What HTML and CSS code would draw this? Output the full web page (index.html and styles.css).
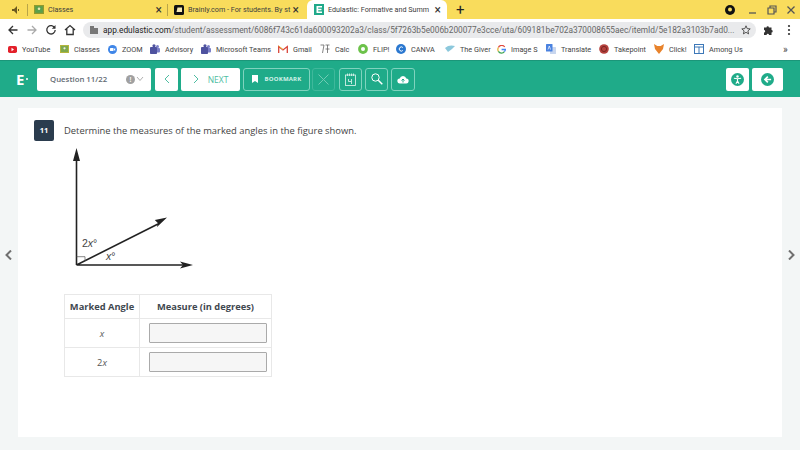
FILE: index.html
```html
<!DOCTYPE html>
<html>
<head>
<meta charset="utf-8">
<title>Edulastic</title>
<link rel="stylesheet" href="styles.css">
</head>
<body>

<!-- Browser tabs -->
<div class="tabstrip">
  <svg class="tab-audio" width="10" height="10" viewBox="0 0 10 10"><path d="M1 4h2l3-3v8L3 6H1z" fill="#6b5a20"/><path d="M7.500 4v2" stroke="#6b5a20"/></svg>
  <div class="tab-sep"></div>
  <div class="tab tab-classes">
    <svg class="favicon" width="10" height="9" viewBox="0 0 10 9"><rect width="10" height="9" fill="#8f9a2e"/><rect x="1.200" y="1.200" width="7.600" height="6.600" fill="#5aa04c"/><circle cx="5" cy="3.800" r="1.300" fill="#e8e6b0"/></svg>
    <span class="tab-title">Classes</span>
    <span class="tab-close">&times;</span>
  </div>
  <div class="tab-sep"></div>
  <div class="tab tab-brainly">
    <svg class="favicon" width="10" height="10" viewBox="0 0 10 10"><rect width="10" height="10" rx="1.500" fill="#111"/><path d="M3.500 2.500H8V7H2.500z" fill="#f7e9b0"/></svg>
    <span class="tab-title">Brainly.com - For students. By st</span>
    <span class="tab-close">&times;</span>
  </div>
  <div class="tab tab-active">
    <svg class="favicon" width="10" height="11" viewBox="0 0 10 11"><rect width="10" height="11" fill="#1fa98a"/><path d="M2.500 2h5.500v1.500H4.200v1.200H7.500v1.500H4.200v1.300H8V9H2.500z" fill="#fff"/></svg>
    <span class="tab-title">Edulastic: Formative and Summ</span>
    <span class="tab-close">&times;</span>
  </div>
  <span class="tab-new">+</span>
  <div class="tabstrip-right">
    <svg width="12" height="12" viewBox="0 0 12 12"><circle cx="6" cy="6" r="5" fill="#111"/><circle cx="6" cy="5.500" r="2" fill="#f7dc5f"/></svg>
    <svg class="win-min" width="10" height="10" viewBox="0 0 10 10"><path d="M1 8h7" stroke="#555" stroke-width="1.300"/></svg>
    <svg class="win-max" width="10" height="10" viewBox="0 0 10 10"><path d="M1 3h6v6H1zM3 3V1h6v6H7" fill="none" stroke="#555" stroke-width="1.200"/></svg>
    <svg class="win-close" width="10" height="10" viewBox="0 0 10 10"><path d="M1.500 1.500l7 7M8.500 1.500l-7 7" stroke="#555" stroke-width="1.300"/></svg>
  </div>
</div>

<!-- Address bar -->
<div class="toolbar">
  <svg width="12" height="12" viewBox="0 0 12 12"><path d="M10.500 6H2M6 2L2 6l4 4" fill="none" stroke="#333" stroke-width="1.300"/></svg>
  <svg width="12" height="12" viewBox="0 0 12 12"><path d="M1.500 6H10M6 2l4 4-4 4" fill="none" stroke="#aaa" stroke-width="1.300"/></svg>
  <svg width="12" height="12" viewBox="0 0 12 12"><path d="M9.800 4A4.200 4.200 0 1 0 10.200 6" fill="none" stroke="#333" stroke-width="1.300"/><path d="M10.500 1v3.800H6.800z" fill="#333"/></svg>
  <svg width="12" height="12" viewBox="0 0 12 12"><path d="M1 6l5-4.500L11 6M2.800 5v5.500h6.400V5" fill="none" stroke="#333" stroke-width="1.300"/></svg>
  <div class="omnibox">
    <svg width="8" height="8" viewBox="0 0 8 8"><path d="M0 0h4v2h4v6H0z" fill="#777"/></svg>
    <span class="url"><b>app.edulastic.com</b>/student/assessment/6086f743c61da600093202a3/class/5f7263b5e006b200077e3cce/uta/609181be702a370008655aec/itemId/5e182a3103b7ad0...</span>
    <svg width="10" height="10" viewBox="0 0 10 10"><path d="M5 .8l1.200 2.800 3 .3-2.300 2 .7 3L5 7.300 2.400 8.900l.7-3-2.300-2 3-.3z" fill="none" stroke="#444" stroke-width=".9"/></svg>
  </div>
  <svg class="puzzle" width="10" height="10" viewBox="0 0 10 10"><path d="M0 2.500h2.500a1.200 1.200 0 0 1 2.400 0h2.600V5a1.200 1.200 0 0 1 0 2.400V10H5a1.200 1.200 0 0 0-2.400 0H0V7.500a1.200 1.200 0 0 0 0-2.400z" fill="#333"/></svg>
  <svg class="kebab" width="4" height="12" viewBox="0 0 4 12"><circle cx="2" cy="2" r="1.100" fill="#333"/><circle cx="2" cy="6" r="1.100" fill="#333"/><circle cx="2" cy="10" r="1.100" fill="#333"/></svg>
</div>

<!-- Bookmarks -->
<div class="bookmarks">
  <div class="bm bm-yt"><svg width="9" height="7" viewBox="0 0 9 7"><rect width="9" height="7" rx="1.800" fill="#e3202a"/><path d="M3.500 1.800L6 3.500 3.500 5.200z" fill="#fff"/></svg>YouTube</div>
  <div class="bm bm-classes"><svg width="9" height="8" viewBox="0 0 9 8"><rect width="9" height="8" fill="#b3b63c"/><rect x="1" y="1" width="7" height="6" fill="#7fa84c"/><circle cx="4.500" cy="3.300" r="1.100" fill="#eee"/></svg>Classes</div>
  <div class="bm bm-zoom"><svg width="9" height="9" viewBox="0 0 9 9"><circle cx="4.500" cy="4.500" r="4.500" fill="#3f86e8"/><rect x="2" y="3" width="3.500" height="3" rx=".6" fill="#fff"/><path d="M6 4l1.200-.9v2.800L6 5z" fill="#fff"/></svg>ZOOM</div>
  <div class="bm bm-advisory"><svg width="10" height="10" viewBox="0 0 10 10"><circle cx="7.500" cy="2.500" r="1.500" fill="#7b80c8"/><rect x="5" y="4" width="5" height="4.500" rx="1" fill="#7b80c8"/><circle cx="4" cy="1.800" r="1.600" fill="#4e529f"/><rect y="3" width="7" height="7" rx=".8" fill="#4e529f"/></svg>Advisory</div>
  <div class="bm bm-teams"><svg width="10" height="10" viewBox="0 0 10 10"><circle cx="7.500" cy="2.500" r="1.500" fill="#7b80c8"/><rect x="5" y="4" width="5" height="4.500" rx="1" fill="#7b80c8"/><circle cx="4" cy="1.800" r="1.600" fill="#4e529f"/><rect y="3" width="7" height="7" rx=".8" fill="#4e529f"/></svg>Microsoft Teams</div>
  <div class="bm bm-gmail"><svg width="10" height="8" viewBox="0 0 10 8"><path d="M.7 8V1.500L5 5l4.300-3.500V8" fill="none" stroke="#d9453a" stroke-width="1.300"/><path d="M.7 1L5 4.500" stroke="#e8b73c"/></svg>Gmail</div>
  <div class="bm bm-calc"><svg width="10" height="10" viewBox="0 0 10 10"><path d="M.5 1h3.500L2.500 9M5.500 1h4M7.500 1v8M5.500 5h4" fill="none" stroke="#666" stroke-width=".8"/></svg>Calc</div>
  <div class="bm bm-flip"><svg width="10" height="10" viewBox="0 0 10 10"><circle cx="5" cy="5" r="4.900" fill="#6cc24a"/><circle cx="5" cy="5" r="2" fill="#fff"/></svg>FLIP!</div>
  <div class="bm bm-canva"><svg width="10" height="10" viewBox="0 0 10 10"><circle cx="5" cy="5" r="5" fill="#2b78d0"/><path d="M6.800 3.500A2.100 2.100 0 1 0 6.800 6.500" fill="none" stroke="#fff"/></svg>CANVA</div>
  <div class="bm bm-giver"><svg width="10" height="8" viewBox="0 0 10 8"><path d="M0 3c3-3 7-3 10-2L7 4 3 7z" fill="#8cc8dc"/></svg>The Giver</div>
  <div class="bm bm-image"><svg width="9" height="9" viewBox="0 0 9 9"><path d="M7.700 2A3.600 3.600 0 0 0 1.400 2.600" fill="none" stroke="#e0483c" stroke-width="1.300"/><path d="M1.400 2.600a3.600 3.600 0 0 0 0 3.800" fill="none" stroke="#e8b73c" stroke-width="1.300"/><path d="M1.400 6.400A3.600 3.600 0 0 0 7.400 6.600" fill="none" stroke="#3fa553" stroke-width="1.300"/><path d="M4.600 4.500h3.800a3.800 3.800 0 0 1-1 2.100" fill="none" stroke="#4285f4" stroke-width="1.300"/></svg>Image S</div>
  <div class="bm bm-translate"><svg width="10" height="10" viewBox="0 0 10 10"><rect x="4" y="3" width="6" height="7" rx=".6" fill="#c8d6ee"/><rect width="6.500" height="7.500" rx=".6" fill="#4a82e0"/><path d="M2 5.500l1.300-3.500 1.200 3.500" fill="none" stroke="#fff" stroke-width=".7"/></svg>Translate</div>
  <div class="bm bm-takepoint"><svg width="10" height="10" viewBox="0 0 10 10"><circle cx="5" cy="5" r="4.800" fill="#b5413c"/><circle cx="5" cy="5" r="2.600" fill="none" stroke="#7a2522"/></svg>Takepoint</div>
  <div class="bm bm-click"><svg width="10" height="10" viewBox="0 0 10 10"><path d="M0 0l3.300 2h3.400L10 0 9 5 5 10 1 5z" fill="#e8832c"/></svg>Click!</div>
  <div class="bm bm-among"><svg width="10" height="10" viewBox="0 0 10 10"><rect x=".5" y=".5" width="9" height="9" fill="none" stroke="#3d78b8"/><path d="M.5 3h9M5 3v6.500" stroke="#3d78b8"/></svg>Among Us</div>
  <span class="bm-more">&raquo;</span>
</div>

<!-- App header -->
<div class="app-header">
  <div class="logo">E<span class="logo-dot"></span></div>
  <div class="btn question-select">
    <span>Question 11/22</span>
    <div class="select-icons">
      <span class="info">!</span>
      <svg width="8" height="6" viewBox="0 0 8 6"><path d="M1 1l3 3.500L7 1" fill="none" stroke="#9a9a9a" stroke-width=".8"/></svg>
    </div>
  </div>
  <div class="btn prev">
    <svg width="6" height="10" viewBox="0 0 6 10"><path d="M5 1L1 5l4 4" fill="none" stroke="#4fbda2"/></svg>
  </div>
  <div class="btn next">
    <svg width="6" height="10" viewBox="0 0 6 10"><path d="M1 1l4 4-4 4" fill="none" stroke="#4fbda2"/></svg>
    <span>NEXT</span>
  </div>
  <div class="btn-line bookmark">
    <svg width="6" height="8" viewBox="0 0 6 8"><path d="M0 0h6v8L3 6 0 8z" fill="#fff"/></svg>
    <span>BOOKMARK</span>
  </div>
  <div class="btn-line square disabled">
    <svg width="11" height="11" viewBox="0 0 11 11"><path d="M.5.500l10 10M10.500.500l-10 10" stroke="#6fcbb4"/></svg>
  </div>
  <div class="btn-line square after-disabled">
    <svg width="11" height="13" viewBox="0 0 11 13"><rect x=".5" y="2" width="10" height="10.500" fill="none" stroke="#e4f6f1" stroke-width=".8"/><path d="M2.500.500v2.500M4.500.500v2.500M6.500.500v2.500M8.500.500v2.500M3.500 6v2.500h2.500M6.500 6v5" fill="none" stroke="#e4f6f1" stroke-width=".8"/></svg>
  </div>
  <div class="btn-line square">
    <svg width="12" height="12" viewBox="0 0 12 12"><circle cx="4.500" cy="4.500" r="3.700" fill="none" stroke="#fff"/><path d="M7.300 7.300l4 4" stroke="#fff" stroke-width="1.500"/></svg>
  </div>
  <div class="btn-line square wider">
    <svg width="12" height="9" viewBox="0 0 12 9"><path d="M3 8.500a2.500 2.500 0 0 1-.3-5 3.400 3.400 0 0 1 6.600 0A2.500 2.500 0 0 1 9 8.500z" fill="#fff"/><path d="M6 7.500V4M4.500 5.500L6 4l1.500 1.500" fill="none" stroke="#1fab89"/></svg>
  </div>
  <div class="header-right">
    <div class="btn square-solid">
      <svg width="13" height="13" viewBox="0 0 18 18"><circle cx="9" cy="9" r="9" fill="#1fab89"/><circle cx="9" cy="4.800" r="1.700" fill="#fff"/><path d="M4 7.200L9 8l5-.8M9 8v3M9 11l-2.200 4M9 11l2.200 4" fill="none" stroke="#fff" stroke-width="1.500"/></svg>
    </div>
    <div class="btn square-solid wide">
      <svg width="13" height="13" viewBox="0 0 18 18"><circle cx="9" cy="9" r="9" fill="#1fab89"/><path d="M14 9H6M9.500 5L5.500 9l4 4" fill="none" stroke="#fff" stroke-width="2.400"/></svg>
    </div>
  </div>
</div>

<!-- Question -->
<div class="content">
  <span class="side-arrow"><svg width="7" height="10" viewBox="0 0 7 10"><path d="M6 .5L1.500 5 6 9.500" fill="none" stroke="#707070" stroke-width="2"/></svg></span>
  <div class="card">
    <div class="question-line">
      <div class="qnum">11</div>
      <p>Determine the measures of the marked angles in the figure shown.</p>
    </div>
    <svg class="figure" width="130" height="124" viewBox="0 0 130 124">
      <path d="M12.500 117V8M12.500 117H120M12.500 117L94 76" fill="none" stroke="#222" stroke-width="1.600"/>
      <path d="M12.500 0L16 13H9zM129 117l-13 3.500 3-3.500-3-3.500zM103 69.500l-10 9.500.8-4-3-3z" fill="#222"/>
      <path d="M12.500 108.700H21V113" fill="none" stroke="#555" stroke-width="0.700"/>
      <text x="18" y="99" class="fig-label">2<tspan class="fig-var">x</tspan>°</text>
      <text x="42" y="112" class="fig-label"><tspan class="fig-var">x</tspan>°</text>
    </svg>
    <table class="answers">
      <tr><th class="col-angle">Marked Angle</th><th class="col-measure">Measure (in degrees)</th></tr>
      <tr><td><em>x</em></td><td><div class="answer-box"></div></td></tr>
      <tr><td>2<em>x</em></td><td><div class="answer-box"></div></td></tr>
    </table>
  </div>
  <span class="side-arrow"><svg width="7" height="10" viewBox="0 0 7 10"><path d="M1 .5L5.500 5 1 9.500" fill="none" stroke="#707070" stroke-width="2"/></svg></span>
</div>

</body>
</html>
```

FILE: styles.css
```css
* {
    box-sizing: border-box;
}

html, body {
    margin: 0;
    height: 100%;
    overflow: hidden;
}

body {
    width: 800px;
    height: 450px;
    background-color: #f3f6f6;
    font-family: "Open Sans", sans-serif;
    display: flex;
    flex-direction: column;
}

/* Browser tabs */
.tabstrip {
    height: 19px;
    background-color: #f9dc5c;
    display: flex;
    align-items: center;
    font-family: "Roboto", sans-serif;
    font-size: 7.200px;
    color: #3c3c3c;
    padding-left: 11px;
}

.tab-audio {
    margin-right: 6px;
}

.tab-sep {
    width: 1px;
    height: 12px;
    background-color: #b9a548;
}

.tab {
    height: 19px;
    display: flex;
    align-items: center;
}

.favicon {
    flex: none;
    margin-right: 4px;
}

.tab-title {
    flex: 1;
    white-space: nowrap;
}

.tab-close {
    font-size: 12px;
    line-height: 12px;
    color: #333;
}

.tab-classes {
    width: 139px;
    padding: 0 5px 0 6px;
}

.tab-brainly {
    width: 139px;
    padding: 0 8px 0 6px;
}

.tab-active {
    width: 140px;
    padding: 0 6px 0 7px;
    background-color: #fff;
    border-radius: 6px 6px 0 0;
}

.tab-new {
    font-size: 15px;
    color: #222;
    margin-left: 9px;
}

.tabstrip-right {
    margin-left: auto;
    display: flex;
    align-items: center;
    padding-right: 4px;
}

.win-min {
    margin-left: 12px;
}

.win-max,
.win-close {
    margin-left: 9px;
}

/* Address bar */
.toolbar {
    height: 21px;
    background-color: #fff;
    display: flex;
    align-items: center;
    gap: 7px;
    padding-left: 7px;
}

.toolbar > svg {
    flex: none;
}

.omnibox {
    width: 673px;
    height: 16px;
    flex: none;
    padding: 0 5px 0 7px;
    border-radius: 8px;
    background-color: #e9eaec;
    display: flex;
    align-items: center;
    gap: 5px;
    font-family: "Roboto", sans-serif;
    font-size: 8.300px;
    color: #666;
}

.url {
    flex: 1;
    white-space: nowrap;
}

.url b {
    font-weight: 400;
    color: #222;
}

.puzzle {
    margin-left: 1px;
}

.kebab {
    margin-left: 6px;
}

/* Bookmarks */
.bookmarks {
    height: 20px;
    padding: 0 0 2px 8px;
    background-color: #fff;
    display: flex;
    align-items: center;
    font-family: "Roboto", sans-serif;
    font-size: 7.300px;
    color: #444;
    white-space: nowrap;
}

.bm {
    display: flex;
    align-items: center;
    gap: 5px;
}

.bm svg {
    flex: none;
}

.bm-yt { width: 52px; }
.bm-classes { width: 48px; }
.bm-zoom { width: 42px; }
.bm-advisory { width: 51px; }
.bm-teams { width: 77px; }
.bm-gmail { width: 42px; }
.bm-calc { width: 38px; }
.bm-flip { width: 38px; }
.bm-canva { width: 49px; }
.bm-giver { width: 52px; }
.bm-image { width: 49px; }
.bm-translate { width: 53px; }
.bm-takepoint { width: 55px; }
.bm-click { width: 40px; }
.bm-among { width: 89px; }

.bm-more {
    font-size: 10px;
}

/* App header */
.app-header {
    height: 37px;
    background-color: #1fab89;
    border-top: 1px solid #1b9679;
    display: flex;
    align-items: center;
    padding: 0 17px 0 16px;
    gap: 3px;
    flex: none;
}

.logo {
    width: 18px;
    color: #fff;
    font-weight: 700;
    font-size: 15px;
    display: flex;
    align-items: center;
    gap: 2px;
}

.logo-dot {
    width: 2px;
    height: 2px;
    background-color: #fff;
    border-radius: 50%;
}

.btn {
    height: 23px;
    background-color: #fff;
    border-radius: 2px;
    display: flex;
    align-items: center;
    justify-content: center;
    flex: none;
}

.question-select {
    width: 114px;
    justify-content: space-between;
    padding: 0 7px 0 13px;
    font-size: 7.800px;
    font-weight: 600;
    color: #5f6a72;
}

.select-icons {
    display: flex;
    align-items: center;
    gap: 1px;
}

.info {
    width: 9px;
    height: 9px;
    border-radius: 50%;
    background-color: #a0a0a0;
    color: #fff;
    font-size: 7px;
    line-height: 9px;
    text-align: center;
}

.prev {
    width: 23px;
    margin-left: 1px;
}

.next {
    width: 59px;
    gap: 9px;
    font-size: 8.500px;
    color: #4fbda2;
}

.btn-line {
    height: 23px;
    border: 1px solid #7fd3be;
    border-radius: 3px;
    display: flex;
    align-items: center;
    justify-content: center;
    flex: none;
}

.bookmark {
    width: 67px;
    gap: 7px;
    font-size: 6px;
    font-weight: 700;
    color: #d6f2ea;
    letter-spacing: 0.200px;
}

.square {
    width: 23px;
}

.square.wider {
    width: 24px;
}

.disabled {
    margin-left: -1px;
    border-color: #3fb89b;
}

.after-disabled {
    margin-left: 1px;
}

.header-right {
    margin-left: auto;
    display: flex;
    gap: 3px;
}

.square-solid {
    width: 23px;
}

.square-solid.wide {
    width: 31px;
}

/* Question */
.content {
    flex: 1;
    display: flex;
    align-items: flex-start;
    justify-content: space-between;
    padding: 11px 5px 0 5px;
}

.side-arrow {
    margin-top: 135px;
    height: 10px;
    display: block;
}

.card {
    width: 764px;
    height: 329px;
    background-color: #fff;
    padding: 12px 16px;
}

.question-line {
    display: flex;
    align-items: center;
    gap: 10px;
    height: 21px;
    margin-bottom: 7px;
}

.qnum {
    width: 20px;
    height: 21px;
    background-color: #2b3c4e;
    border-radius: 2px;
    color: #fff;
    font-size: 7.500px;
    font-weight: 700;
    line-height: 21px;
    text-align: center;
}

.question-line p {
    margin: 0;
    font-size: 9.400px;
    color: #444;
}

.figure {
    display: block;
    margin-left: 30px;
}

.fig-label {
    font-family: "Liberation Sans", sans-serif;
    font-size: 10.500px;
    fill: #444;
}

.fig-var {
    font-style: italic;
}

.answers {
    border-collapse: collapse;
    margin: 22px 0 0 30px;
    font-size: 9.300px;
    color: #555;
}

.answers th,
.answers td {
    border: 1px solid #e8e8e8;
    padding: 0;
    text-align: center;
}

.answers th {
    height: 24px;
    font-weight: 700;
    color: #3f4850;
}

.answers td {
    height: 29px;
}

.col-angle {
    width: 75px;
}

.col-measure {
    width: 132px;
}

.answer-box {
    width: 118px;
    height: 20px;
    margin-left: 9px;
    background-color: #f6f6f6;
    border: 1px solid #aaa;
    border-radius: 1px;
}
```
